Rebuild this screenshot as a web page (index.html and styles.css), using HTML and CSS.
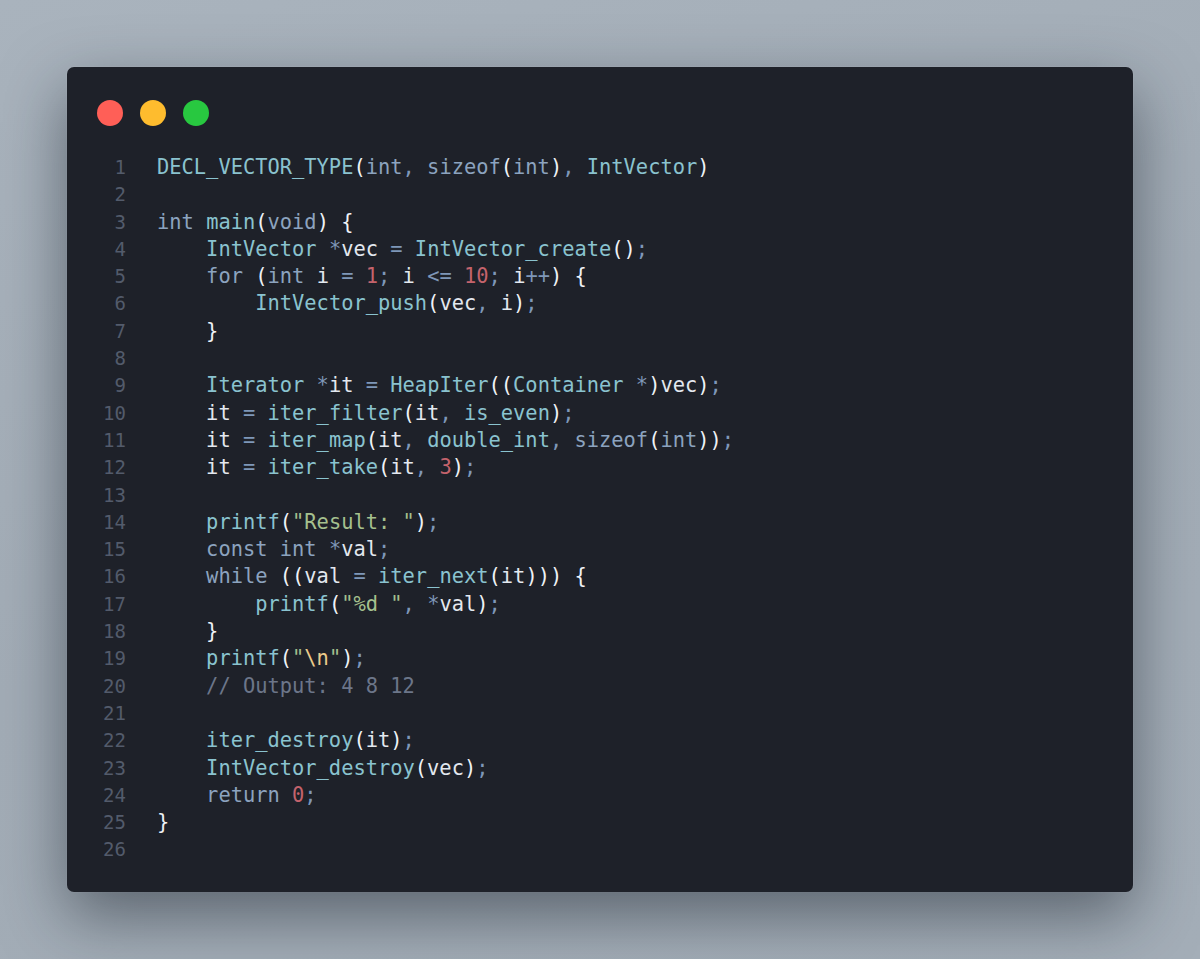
FILE: index.html
```html
<!DOCTYPE html>
<html>
<head>
<meta charset="utf-8">
<link rel="stylesheet" href="styles.css">
</head>
<body>
<div class="window">
  <div class="dots">
    <span class="dot red"></span>
    <span class="dot yellow"></span>
    <span class="dot green"></span>
  </div>
  <div class="code">
    <div class="gutter">
      <div>1</div><div>2</div><div>3</div><div>4</div><div>5</div><div>6</div><div>7</div><div>8</div><div>9</div><div>10</div><div>11</div><div>12</div><div>13</div><div>14</div><div>15</div><div>16</div><div>17</div><div>18</div><div>19</div><div>20</div><div>21</div><div>22</div><div>23</div><div>24</div><div>25</div><div>26</div>
    </div>
    <pre class="src"><span class="fn">DECL_VECTOR_TYPE</span><span class="p">(</span><span class="kw">int</span><span class="op">,</span> <span class="kw">sizeof</span><span class="p">(</span><span class="kw">int</span><span class="p">)</span><span class="op">,</span> <span class="fn">IntVector</span><span class="p">)</span>

<span class="kw">int</span> <span class="fn">main</span><span class="p">(</span><span class="kw">void</span><span class="p">)</span> <span class="p">{</span>
    <span class="fn">IntVector</span> <span class="op">*</span><span class="v">vec</span> <span class="op">=</span> <span class="fn">IntVector_create</span><span class="p">()</span><span class="op">;</span>
    <span class="kw">for</span> <span class="p">(</span><span class="kw">int</span> <span class="v">i</span> <span class="op">=</span> <span class="num">1</span><span class="op">;</span> <span class="v">i</span> <span class="op">&lt;=</span> <span class="num">10</span><span class="op">;</span> <span class="v">i</span><span class="op">++</span><span class="p">)</span> <span class="p">{</span>
        <span class="fn">IntVector_push</span><span class="p">(</span><span class="v">vec</span><span class="op">,</span> <span class="v">i</span><span class="p">)</span><span class="op">;</span>
    <span class="p">}</span>

    <span class="fn">Iterator</span> <span class="op">*</span><span class="v">it</span> <span class="op">=</span> <span class="fn">HeapIter</span><span class="p">((</span><span class="fn">Container</span> <span class="op">*</span><span class="p">)</span><span class="v">vec</span><span class="p">)</span><span class="op">;</span>
    <span class="v">it</span> <span class="op">=</span> <span class="fn">iter_filter</span><span class="p">(</span><span class="v">it</span><span class="op">,</span> <span class="fn">is_even</span><span class="p">)</span><span class="op">;</span>
    <span class="v">it</span> <span class="op">=</span> <span class="fn">iter_map</span><span class="p">(</span><span class="v">it</span><span class="op">,</span> <span class="fn">double_int</span><span class="op">,</span> <span class="kw">sizeof</span><span class="p">(</span><span class="kw">int</span><span class="p">))</span><span class="op">;</span>
    <span class="v">it</span> <span class="op">=</span> <span class="fn">iter_take</span><span class="p">(</span><span class="v">it</span><span class="op">,</span> <span class="num">3</span><span class="p">)</span><span class="op">;</span>

    <span class="fn">printf</span><span class="p">(</span><span class="str">"Result: "</span><span class="p">)</span><span class="op">;</span>
    <span class="kw">const</span> <span class="kw">int</span> <span class="op">*</span><span class="v">val</span><span class="op">;</span>
    <span class="kw">while</span> <span class="p">((</span><span class="v">val</span> <span class="op">=</span> <span class="fn">iter_next</span><span class="p">(</span><span class="v">it</span><span class="p">)))</span> <span class="p">{</span>
        <span class="fn">printf</span><span class="p">(</span><span class="str">"%d "</span><span class="op">,</span> <span class="op">*</span><span class="v">val</span><span class="p">)</span><span class="op">;</span>
    <span class="p">}</span>
    <span class="fn">printf</span><span class="p">(</span><span class="str">"</span><span class="esc">\n</span><span class="str">"</span><span class="p">)</span><span class="op">;</span>
    <span class="cm">// Output: 4 8 12</span>

    <span class="fn">iter_destroy</span><span class="p">(</span><span class="v">it</span><span class="p">)</span><span class="op">;</span>
    <span class="fn">IntVector_destroy</span><span class="p">(</span><span class="v">vec</span><span class="p">)</span><span class="op">;</span>
    <span class="kw">return</span> <span class="num">0</span><span class="op">;</span>
<span class="p">}</span>
</pre>
  </div>
</div>
</body>
</html>
```

FILE: styles.css
```css
html, body {
  margin: 0;
  padding: 0;
}
body {
  width: 1200px;
  height: 959px;
  box-sizing: border-box;
  padding: 67px 67px 0 67px;
  background: linear-gradient(160deg, #a9b3bd 0%, #a2acb6 50%, #a4aeb8 100%);
  overflow: hidden;
}
.window {
  width: 1066px;
  box-sizing: border-box;
  background: #1e2129;
  border-radius: 7px;
  padding: 33px 30px 28px 30px;
  box-shadow: 0 24px 64px rgba(20, 28, 38, 0.5), 0 0 0 1px rgba(255, 255, 255, 0.06);
}
.dots {
  display: flex;
  gap: 17px;
  height: 26px;
}
.dot {
  width: 26px;
  height: 26px;
  border-radius: 50%;
  display: block;
}
.red { background: #ff5f57; }
.yellow { background: #febc2e; }
.green { background: #28c840; }
.code {
  display: flex;
  margin-top: 28px;
  font-family: "DejaVu Sans Mono", "Liberation Mono", monospace;
  font-size: 20.4px;
  line-height: 27.3px;
}
.gutter {
  width: 29px;
  text-align: right;
  color: #535b6b;
  margin-right: 31px;
  font-size: 19px;
}
.src {
  margin: 0;
  font: inherit;
  color: #d8dee9;
}
.fn { color: #8ac3cf; }
.kw { color: #8ca3bf; }
.op { color: #7f97b8; }
.p { color: #eff2f6; }
.v { color: #e3e8ef; }
.num { color: #c4636c; }
.str { color: #a5c08e; }
.esc { color: #ebcb8b; }
.cm { color: #6c7689; }
```
